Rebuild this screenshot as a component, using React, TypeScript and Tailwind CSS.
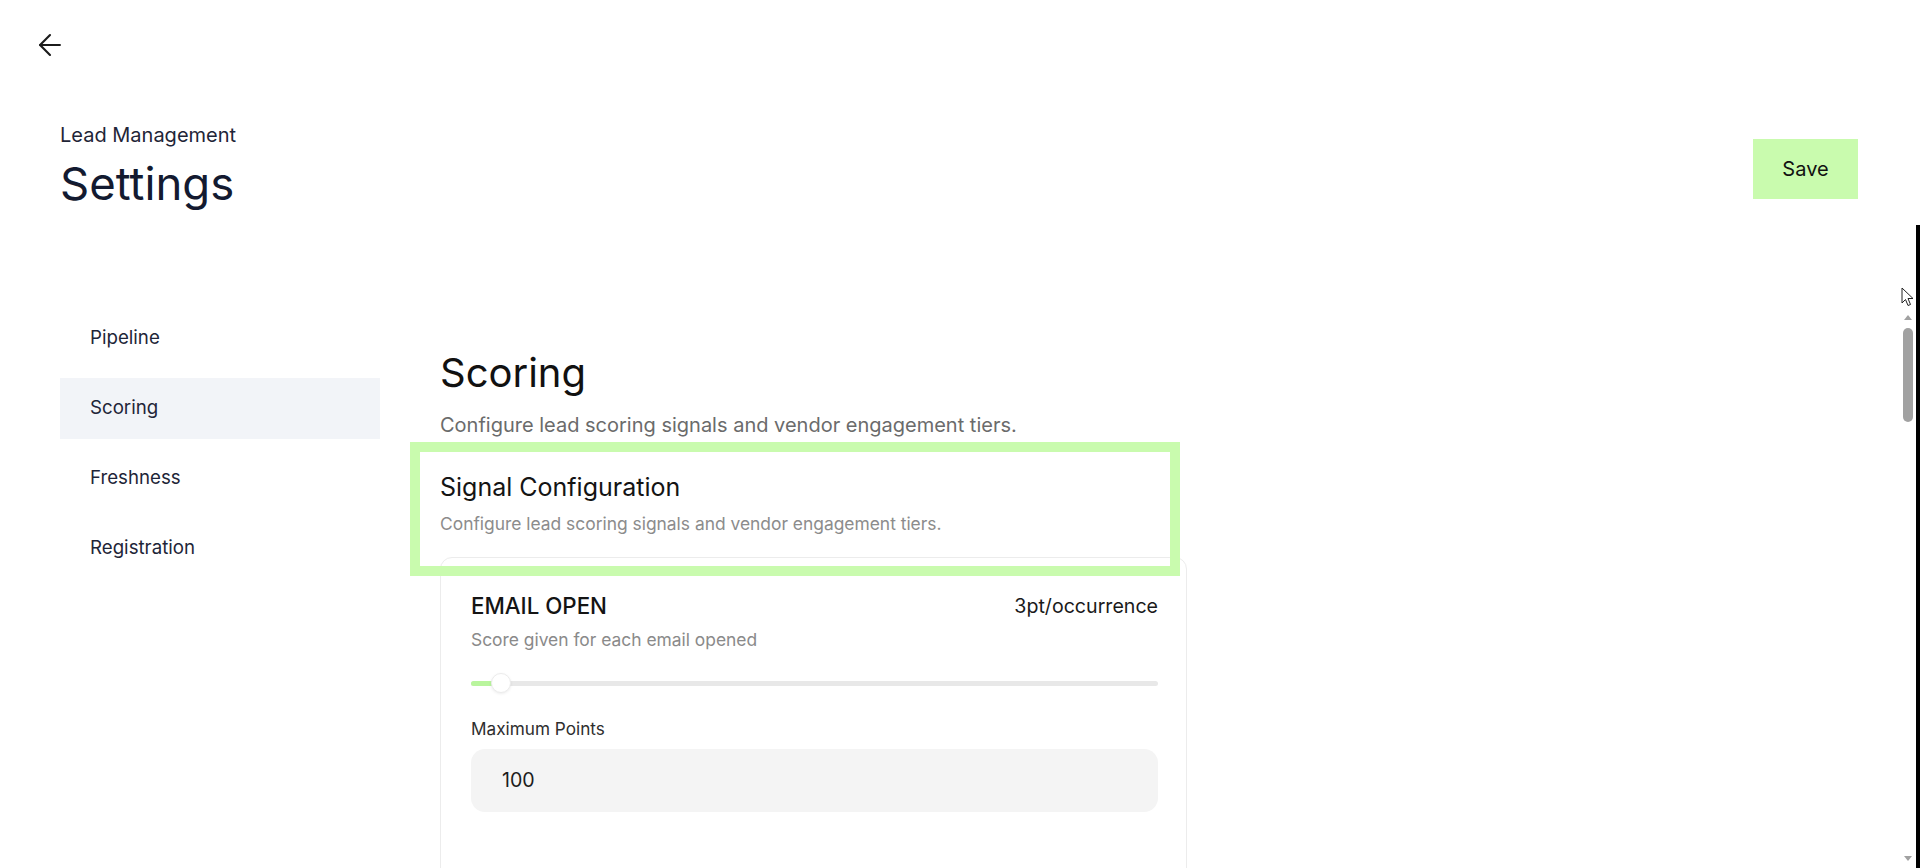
import React from "react";
import { ArrowLeft } from "lucide-react";

type Signal = {
  key: string;
  label: string;
  hint: string;
  points: number;
  max: number;
};

const menu = ["Pipeline", "Scoring", "Freshness", "Registration"];

const signals: Signal[] = [
  { key: "email-open", label: "EMAIL OPEN", hint: "Score given for each email opened", points: 3, max: 100 },
];

function Slider({ value, max }: { value: number; max: number }) {
  const pct = Math.max((value / max) * 100, 3.2);
  return (
    <div className="relative h-[20px] flex items-center">
      <div className="h-[5px] w-full rounded-full bg-[#e8e8e8]">
        <div className="h-full rounded-full bg-[#b9f59d]" style={{ width: `${pct}%` }} />
      </div>
      <div
        className="absolute top-0 h-[20px] w-[20px] -ml-[10px] rounded-full border border-[#ececec] bg-white shadow-[0_1px_3px_rgba(0,0,0,0.08)]"
        style={{ left: `${pct + 1.2}%` }}
      />
    </div>
  );
}

function SignalRow({ s }: { s: Signal }) {
  return (
    <div className="flex flex-col">
      <div className="flex items-center justify-between">
        <span className="text-[22.3px] leading-[28px] font-medium text-[#141414]">{s.label}</span>
        <span className="text-[19.6px] leading-[28px] text-[#1a1a1a]">{s.points}pt/occurrence</span>
      </div>
      <p className="mt-[8px] text-[17.4px] leading-[24px] text-[#8a8a8a]">{s.hint}</p>
      <div className="mt-[21px]">
        <Slider value={s.points} max={s.max} />
      </div>
      <label className="mt-[24px] text-[17.2px] leading-[24px] text-[#2e2e2e]">Maximum Points</label>
      <div className="mt-[8px] h-[63px] rounded-[14px] bg-[#f4f4f4] flex items-center pl-[31px] text-[19.6px] text-[#1c1c1c]">
        {s.max}
      </div>
    </div>
  );
}

// classic scrollbar drawn beside the settings pane
function ScrollBar() {
  return (
    <div className="w-[17px] shrink-0 flex flex-col items-center bg-white">
      <div className="h-[18px] flex items-center justify-center">
        <div className="w-0 h-0 border-x-[4px] border-x-transparent border-b-[5px] border-b-[#a1a1a1]" />
      </div>
      <div className="flex-1 w-full flex flex-col items-center">
        <div className="mt-[2px] w-[10px] h-[94px] rounded-full bg-[#a1a1a1]" />
      </div>
      <div className="h-[20px] flex items-center justify-center">
        <div className="w-0 h-0 border-x-[4px] border-x-transparent border-t-[5px] border-t-[#a1a1a1]" />
      </div>
    </div>
  );
}

export default function App() {
  return (
    <div className="relative h-screen flex bg-white font-['Inter','Noto_Sans',sans-serif] overflow-hidden">
      <div className="flex-1 flex flex-col min-w-0">
        <header className="h-[308px] shrink-0 flex flex-col">
          <button className="mt-[28px] ml-[33px] w-[34px] h-[34px] text-[#1b1b1b]">
            <ArrowLeft size={34} strokeWidth={1.5} />
          </button>
          <div className="mt-[59px] pl-[60px] pr-[58px] flex items-center justify-between">
            <div className="flex flex-col">
              <span className="text-[20px] leading-[28px] text-[#1f2537]">Lead Management</span>
              <h1 className="mt-[8px] text-[45.5px] leading-[53px] text-[#131a30]">Settings</h1>
            </div>
            <button className="w-[105px] h-[60px] bg-[#c9fbae] text-[20px] text-[#111] mt-[6px]">Save</button>
          </div>
        </header>

        <div className="flex-1 flex min-h-0">
          <div className="flex-1 overflow-hidden">
            <div className="flex">
              <nav className="ml-[60px] w-[320px] shrink-0 flex flex-col gap-[9px]">
                {menu.map((m) => (
                  <div
                    key={m}
                    className={
                      "h-[61px] px-[30px] flex items-center text-[18.7px] text-[#1e2538] " +
                      (m === "Scoring" ? "bg-[#f2f4f8]" : "")
                    }
                  >
                    {m}
                  </div>
                ))}
              </nav>

              <main className="ml-[60px] w-[747px] shrink-0 flex flex-col">
                <h2 className="mt-[41px] text-[40px] leading-[48px] text-[#111]">Scoring</h2>
                <p className="mt-[14px] text-[20px] leading-[28px] text-[#6b6b6b]">
                  Configure lead scoring signals and vendor engagement tiers.
                </p>

                <section className="relative mt-[13px]">
                  <div className="pt-[19px]">
                    <h3 className="text-[25px] leading-[32px] text-[#141414]">Signal Configuration</h3>
                    <p className="mt-[9px] text-[17.4px] leading-[24px] text-[#8c8c8c]">
                      Configure lead scoring signals and vendor engagement tiers.
                    </p>
                  </div>

                  <div className="mt-[21px] min-h-[420px] rounded-[12px] border border-[#ececec] pl-[30px] pr-[28px] pt-[34px] pb-[60px] flex flex-col gap-[64px]">
                    {signals.map((s) => (
                      <SignalRow key={s.key} s={s} />
                    ))}
                  </div>

                  {/* focus frame drawn over the section header */}
                  <div className="pointer-events-none absolute -top-[10px] -left-[30px] w-[770px] h-[134px] border-[10px] border-[#c9fbae]" />
                </section>
              </main>
            </div>
          </div>
          <ScrollBar />
        </div>
      </div>

      <div className="w-[4px] shrink-0 flex flex-col">
        <div className="h-[225px] bg-white" />
        <div className="flex-1 bg-black" />
      </div>

      {/* mouse pointer */}
      <svg className="absolute left-[1901px] top-[287px]" width="14" height="20" viewBox="0 0 14 20">
        <path d="M1 1 L1 16 L4.5 12.5 L7 18.5 L9.5 17.5 L7 11.5 L12 11.5 Z" fill="white" stroke="#222" strokeWidth="1" strokeLinejoin="round" />
      </svg>
    </div>
  );
}
